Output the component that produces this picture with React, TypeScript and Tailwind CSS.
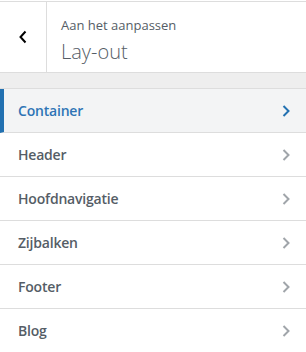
const items = ['Container', 'Header', 'Hoofdnavigatie', 'Zijbalken', 'Footer', 'Blog'];

const Chevron = ({ className }: { className: string }) => (
    <svg width="8" height="12" viewBox="0 0 8 12" className={className}>
        <path d="M1.5 1l5 5-5 5" fill="none" stroke="currentColor" strokeWidth="2" />
    </svg>
);

export default function App() {
    return (
        <div className="w-[306px] h-[352px] bg-white font-['Open_Sans',sans-serif] overflow-hidden">
            <div className="mt-px flex h-[72px] border-t border-b border-[#dddddd] bg-white">
                <button className="w-[47px] flex items-center justify-center border-r border-[#dddddd] text-black">
                    <svg width="10" height="14" viewBox="0 0 10 14" className="ml-[-1px]">
                        <path d="M7.5 1.5L2.5 7l5 5.5" fill="none" stroke="currentColor" strokeWidth="2" />
                    </svg>
                </button>
                <div className="pl-[14px] pt-[13px]">
                    <div className="text-[13px] leading-[20px] text-[#555d66]">Aan het aanpassen</div>
                    <div className="mt-[4px] text-[20px] leading-[26px] font-light text-[#555d66]">Lay-out</div>
                </div>
            </div>
            <div className="h-[15px] bg-[#eeeeee]" />
            <ul className="border-t border-[#dddddd]">
                {items.map((item, i) => (
                    <li
                        key={item}
                        className={
                            i === 0
                                ? 'flex h-[44px] items-center justify-between border-b border-[#dddddd] border-l-4 border-l-[#2271b1] bg-[#f3f4f5] pl-[14px] pr-[16px] text-[14px] font-semibold tracking-[-0.2px] text-[#2e74b5]'
                                : 'flex h-[44px] items-center justify-between border-b border-[#dddddd] pl-[18px] pr-[16px] text-[14px] font-semibold tracking-[-0.2px] text-[#555d66]'
                        }
                    >
                        <span>{item}</span>
                        <Chevron className={i === 0 ? 'text-[#2271b1]' : 'text-[#a0a5aa]'} />
                    </li>
                ))}
            </ul>
        </div>
    );
}
